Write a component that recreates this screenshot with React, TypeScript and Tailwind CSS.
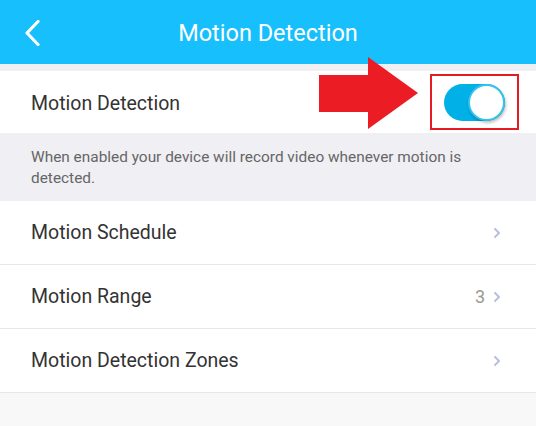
import { ChevronRight } from "lucide-react";

const rows = [
  { label: "Motion Schedule" },
  { label: "Motion Range", value: "3" },
  { label: "Motion Detection Zones" },
];

const Toggle = () => (
  <div className="relative h-[37px] w-[61px] rounded-full bg-[#00b0e6]">
    <div className="absolute right-0 top-0 h-[37px] w-[37px] rounded-full border-2 border-[#35c3ee] bg-white shadow-[1px_2px_3px_rgba(0,0,0,0.25)]" />
  </div>
);

export default function App() {
  return (
    <div className="relative h-[426px] w-[536px] overflow-hidden bg-[#f8f8f8] font-['Roboto',sans-serif]">
      <header className="flex h-[64px] items-center bg-[#17bffc] pl-[25px]">
        <svg width="15" height="26" viewBox="0 0 15 26" className="mt-[2px] shrink-0">
          <polyline
            points="13,1.5 2,13 13,24.5"
            fill="none"
            stroke="white"
            strokeWidth="3.2"
            strokeLinecap="round"
            strokeLinejoin="round"
          />
        </svg>
        <h1 className="flex-1 pr-[40px] pt-[3px] text-center text-[23.5px] text-white">
          Motion Detection
        </h1>
      </header>
      <div className="h-[7px] bg-[#f0eff4]" />
      <div className="flex h-[62px] items-center bg-white pl-[31px] pr-[17px]">
        <span className="flex-1 pt-[3px] text-[19.5px] text-[#333]">Motion Detection</span>
        <div className="flex h-[56px] w-[89px] items-center justify-center border-2 border-[#e51b24]">
          <Toggle />
        </div>
      </div>
      <p className="bg-[#f0eff4] px-[31px] pb-[12px] pt-[14px] text-[15.4px] leading-[21px] text-[#666]">
        When enabled your device will record video whenever motion is detected.
      </p>
      {rows.map((row) => (
        <div
          key={row.label}
          className="flex h-[64px] items-center border-b border-[#e6e6ec] bg-white pl-[31px] pr-[31px]"
        >
          <span className="flex-1 pt-[1px] text-[19.5px] text-[#333]">{row.label}</span>
          {row.value && (
            <span className="mr-[4px] text-[18px] text-[#999]">{row.value}</span>
          )}
          <ChevronRight className="h-[16px] w-[16px] text-[#b8c0dc]" strokeWidth={3} />
        </div>
      ))}
      <svg
        className="absolute left-[319px] top-[57px]"
        width="100"
        height="73"
        viewBox="0 0 100 73"
      >
        <polygon
          points="0,18 49,18 49,0 99,36 49,72 49,55 0,55"
          fill="#ec1c24"
        />
      </svg>
    </div>
  );
}
